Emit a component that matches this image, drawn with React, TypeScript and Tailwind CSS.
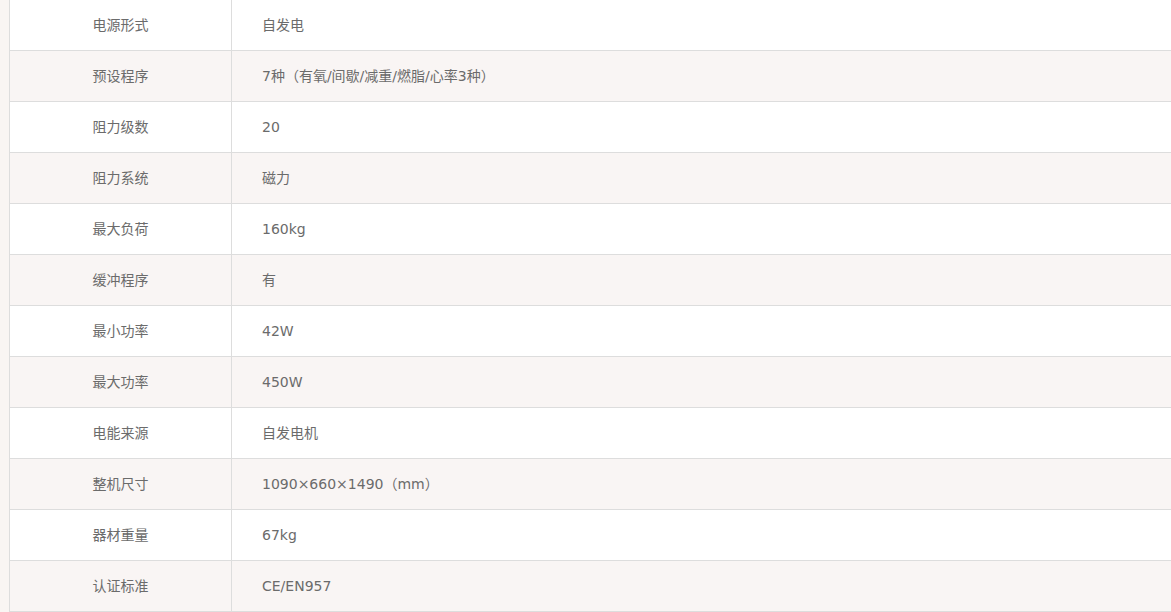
const rows: [string, string][] = [
  ["电源形式", "自发电"],
  ["预设程序", "7种（有氧/间歇/减重/燃脂/心率3种）"],
  ["阻力级数", "20"],
  ["阻力系统", "磁力"],
  ["最大负荷", "160kg"],
  ["缓冲程序", "有"],
  ["最小功率", "42W"],
  ["最大功率", "450W"],
  ["电能来源", "自发电机"],
  ["整机尺寸", "1090×660×1490（mm）"],
  ["器材重量", "67kg"],
  ["认证标准", "CE/EN957"],
];

export default function App() {
  return (
    <div
      className="min-h-[612px] w-[1171px] overflow-hidden bg-[#f9f5f3] pl-[9px] text-[14px] text-[#6b6b6b]"
      style={{ fontFamily: '"DejaVu Sans", "Noto Sans CJK SC", sans-serif' }}
    >
      <div className="w-[1200px] border-l border-[#ddd]">
        {rows.map(([label, value], i) => (
          <div
            key={label}
            className={`flex h-[51px] border-b border-[#ddd] ${i % 2 === 1 ? "bg-[#f9f5f4]" : "bg-white"}`}
          >
            <div className="flex w-[222px] items-center justify-center border-r border-[#ddd]">
              {label}
            </div>
            <div className="flex flex-1 items-center pl-[30px]">{value}</div>
          </div>
        ))}
      </div>
    </div>
  );
}
